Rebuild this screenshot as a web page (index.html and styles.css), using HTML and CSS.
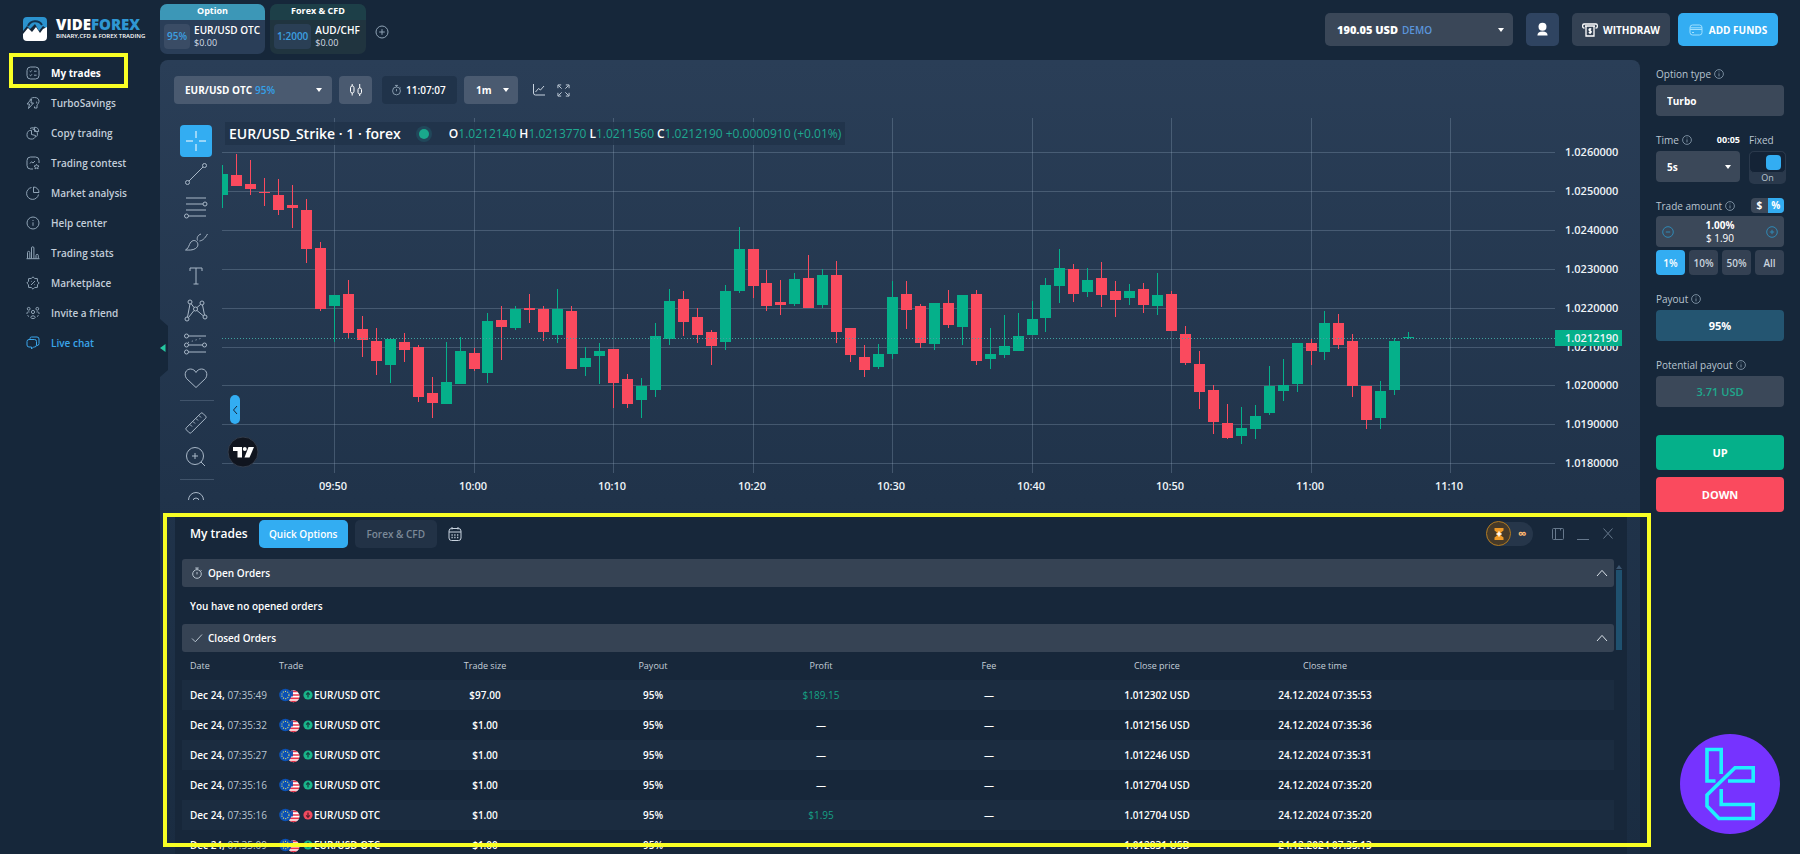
FILE: index.html
```html
<!DOCTYPE html>
<html lang="en">
<head>
<meta charset="utf-8">
<title>Videforex – Trading platform</title>
<link rel="stylesheet" href="styles.css">
</head>
<body>
<svg class="defs" aria-hidden="true">
  <defs>
    <symbol id="info" viewBox="0 0 10 10"><circle cx="5" cy="5" r="4.4"/><path d="M5 4.4V7.4M5 2.5V3.3"/></symbol>
    <symbol id="watch" viewBox="0 0 12 12"><circle cx="6" cy="7" r="4.3"/><path d="M4.3 1h3.4M6 1v1.6M6 5v2.4M9.6 2.9l.9.9"/></symbol>
    <symbol id="caret" viewBox="0 0 8 6"><path d="M1 1h6L4 5z"/></symbol>
    <symbol id="chev-up" viewBox="0 0 12 8"><path d="M1 7l5-5.6L11 7"/></symbol>
    <symbol id="flags" viewBox="0 0 21 15">
      <clipPath id="us-clip"><circle cx="14.5" cy="8.2" r="6"/></clipPath>
      <g clip-path="url(#us-clip)">
        <rect x="8" y="2" width="13" height="13" fill="#fff"/>
        <path d="M8 3.4h13M8 7h13M8 10.4h13M8 13.6h13" stroke="#e8334a" stroke-width="1.7"/>
        <rect x="8" y="2" width="6" height="6.4" fill="#2b4fa3"/>
      </g>
      <circle cx="6.4" cy="7" r="6.2" fill="#0a51b5"/>
      <circle cx="6.4" cy="7" r="3.6" fill="none" stroke="#d9d36a" stroke-width="1.1" stroke-dasharray="1.1 1.2"/>
    </symbol>
    <symbol id="up" viewBox="0 0 10 10"><circle cx="5" cy="5" r="4.6" fill="#19b58a"/><path d="M5 7.6V2.8M3.2 4.6L5 2.6l1.8 2" fill="none" stroke="#12403f" stroke-width="1.2"/></symbol>
    <symbol id="down" viewBox="0 0 10 10"><circle cx="5" cy="5" r="4.6" fill="#f04a5e"/><path d="M5 2.4v4.8M3.2 5.4L5 7.4l1.8-2" fill="none" stroke="#5c1c2c" stroke-width="1.2"/></symbol>
  </defs>
</svg>

<div class="app">
  <aside class="sidebar">
    <a class="logo" href="#">
      <svg class="logo-mark" viewBox="0 0 24 24"><path d="M4 0h16a4 4 0 0 1 4 4v8l-4-3-4 5-4-7-5 5-3-3-4 5V4a4 4 0 0 1 4-4z" fill="#2b93cf"/><path d="M5 9a8 8 0 0 1 14-1" fill="none" stroke="#12324e" stroke-width="2"/><path d="M0 17l5-6 4 4 4-5 4 6 3-4 4-2v10a4 4 0 0 1-4 4H4a4 4 0 0 1-4-4z" fill="#fff"/></svg>
      <span class="logo-text"><span class="logo-name">VIDE<b>FOREX</b></span><span class="logo-sub">BINARY,CFD &amp; FOREX TRADING</span></span>
    </a>
    <nav class="nav">
      <a class="nav-item current" href="#"><svg class="icon" viewBox="0 0 14 14"><rect x="1" y="1" width="12" height="12" rx="3.5"/><path d="M3.6 5l.9.9 1.4-1.6M3.6 9l.9.9 1.4-1.6M8 5.2h2.6M8 9.2h2.6"/></svg>My trades</a>
      <a class="nav-item" href="#"><svg class="icon" viewBox="0 0 14 14"><path d="M4 4.500C4 2.500 6 1.500 8.500 1.500c3 0 4.500 1.500 4.500 4-.5 2-1.500 3-2 3.500V12H8.500v-1.500M5.500 3L1 8h2.500L2.500 12.500 7.500 7H5z"/><path d="M10 5.500c1 .5 1 1.500 0 2"/></svg>TurboSavings</a>
      <a class="nav-item" href="#"><svg class="icon" viewBox="0 0 14 14"><path d="M8.500 1.200a4.300 4.300 0 0 1 4.200 4.300H8.500z"/><path d="M6.500 3.200a5 5 0 0 1 5 5 4 4 0 0 1-1 2.500"/><path d="M5.500 4.300a4.400 4.400 0 1 0 4.200 5.200L5.500 8.500z"/><path d="M4 2.500A5 5 0 0 1 8 2"/></svg>Copy trading</a>
      <a class="nav-item" href="#"><svg class="icon" viewBox="0 0 14 14"><path d="M7 13H4.500A3.500 3.500 0 0 1 1 9.500v-5A3.500 3.500 0 0 1 4.500 1h5A3.500 3.500 0 0 1 13 4.500V7"/><path d="M4 7.500l1.500-1.700L7 7l2-2"/><path d="M10.500 8.300l.8 1.500 1.700.2-1.200 1.200.3 1.700-1.600-.8-1.500.8.3-1.700L8 10l1.700-.2z"/></svg>Trading contest</a>
      <a class="nav-item" href="#"><svg class="icon" viewBox="0 0 14 14"><path d="M5.500 1.500a6 6 0 1 0 7 7"/><path d="M7.500 1a5.500 5.500 0 0 1 5.500 5.500H7.500z"/></svg>Market analysis</a>
      <a class="nav-item" href="#"><svg class="icon" viewBox="0 0 14 14"><circle cx="7" cy="7" r="6"/><path d="M7 6.300v3.500M7 4v1"/></svg>Help center</a>
      <a class="nav-item" href="#"><svg class="icon" viewBox="0 0 14 14"><path d="M1.500 12.500V6.500a1 1 0 0 1 2.300 0v6M5.500 12.500V2a1.200 1.200 0 0 1 2.400 0v10.500M10 12.500v-3a1.100 1.100 0 0 1 2.300 0v3M.5 12.700h13"/></svg>Trading stats</a>
      <a class="nav-item" href="#"><svg class="icon" viewBox="0 0 14 14"><path d="M7 .8L8.700 2.500 11.400 2.600 11.500 5.300 13.200 7 11.500 8.700 11.400 11.400 8.700 11.500 7 13.200 5.300 11.500 2.600 11.400 2.500 8.700.8 7 2.500 5.300 2.600 2.600 5.300 2.500z"/><path d="M5 9l4-4M5.200 5.400h.6M8.300 8.600h.6"/></svg>Marketplace</a>
      <a class="nav-item" href="#"><svg class="icon" viewBox="0 0 14 14"><circle cx="7" cy="6" r="1.600"/><circle cx="2.700" cy="2.800" r="1.400"/><circle cx="11.300" cy="2.800" r="1.400"/><path d="M4.700 11.500a2.400 2.400 0 0 1 4.600 0 3 3 0 0 1-4.600 0zM1 8c-.5-1.800 1-2.500 2.500-2M13 8c.5-1.800-1-2.500-2.500-2M3 10.500L1.500 9.500M11 10.500l1.500-1"/></svg>Invite a friend</a>
      <a class="nav-item chat" href="#"><svg class="icon" viewBox="0 0 14 14"><path d="M4 3.500V2.500A1.500 1.500 0 0 1 5.500 1H11a2 2 0 0 1 2 2v4.500a2 2 0 0 1-2 2"/><path d="M3 3.500h5.500a2 2 0 0 1 2 2v3.500a2 2 0 0 1-2 2H7.500L5.500 13v-2H3a2 2 0 0 1-2-2V5.500a2 2 0 0 1 2-2z"/></svg>Live chat</a>
    </nav>
  </aside>

  <header class="topbar">
    <div class="tabs">
      <a class="tab" href="#">
        <span class="tab-kind">Option</span>
        <span class="tab-body"><span class="tab-rate">95%</span><span class="tab-pair"><b>EUR/USD OTC</b><small>$0.00</small></span></span>
      </a>
      <a class="tab forex" href="#">
        <span class="tab-kind">Forex &amp; CFD</span>
        <span class="tab-body"><span class="tab-rate">1:2000</span><span class="tab-pair"><b>AUD/CHF</b><small>$0.00</small></span></span>
      </a>
      <button class="add-tab" aria-label="Add chart"><svg viewBox="0 0 14 14"><circle cx="7" cy="7" r="6"/><path d="M7 4.200v5.600M4.200 7h5.600"/></svg></button>
    </div>
    <div class="account">
      <button class="balance"><b>190.05 USD</b><span>DEMO</span><svg class="caret"><use href="#caret"/></svg></button>
      <button class="profile" aria-label="Profile"><svg viewBox="0 0 14 16"><circle cx="7" cy="5" r="4.300"/><path d="M1.500 14.500c0-3 2-4.300 5.500-4.300s5.500 1.300 5.500 4.300z"/></svg></button>
      <button class="withdraw"><svg viewBox="0 0 16 14"><path d="M2.500 5H2a1.300 1.300 0 0 1-1.300-1.300V2.300A1.300 1.300 0 0 1 2 1h12a1.300 1.300 0 0 1 1.300 1.300v1.400A1.300 1.300 0 0 1 14 5h-.5M3 3h10M4 3v10h8V3"/><path d="M9.300 6.300C8.500 5.500 7 5.800 7 6.800c0 1.200 2.300.8 2.300 2 0 1-1.600 1.300-2.500.4M8.100 5v6"/></svg>WITHDRAW</button>
      <button class="add-funds"><svg viewBox="0 0 14 12"><rect x="1" y="1" width="12" height="10" rx="2.500"/><path d="M1 3.800h12M1 5.500h12M3 8.500h2"/></svg>ADD FUNDS</button>
    </div>
  </header>

  <main class="main">
    <div class="toolbar">
      <button class="chip asset"><b>EUR/USD OTC</b><span>95%</span><svg class="caret"><use href="#caret"/></svg></button>
      <button class="chip candles" aria-label="Chart type"><svg viewBox="0 0 14 14"><rect x="1.500" y="3" width="3.500" height="7" rx="1.700"/><path d="M3.200 1v2M3.200 10v2.500"/><rect x="9" y="5" width="3.500" height="6" rx="1.700"/><path d="M10.700 1v4M10.700 11v2"/></svg></button>
      <span class="clock"><svg><use href="#watch"/></svg>11:07:07</span>
      <label class="chip frame"><select aria-label="Timeframe"><option>1m</option></select><svg class="caret"><use href="#caret"/></svg></label>
      <button class="bare" aria-label="Indicators"><svg viewBox="0 0 14 14"><path d="M1.500 1v9a2 2 0 0 0 2 2H13M3.500 9l3-3.500 2 1.500L12 3"/></svg></button>
      <button class="bare small" aria-label="Full screen"><svg viewBox="0 0 14 14"><path d="M1 4.500V1h3.500M1.500 1.500l3.500 3.500M9.500 1H13v3.500M12.500 1.500L9 5M1 9.500V13h3.500M1.500 12.500L5 9M13 9.500V13H9.500M12.500 12.500L9 9"/></svg></button>
    </div>

    <div class="workspace">
      <div class="tools">
        <button class="tool active" aria-label="Crosshair"><svg viewBox="0 0 24 24"><path d="M12 2v7M12 15v7M2 12h7M15 12h7"/></svg></button>
        <button class="tool" aria-label="Trend line"><svg viewBox="0 0 24 24"><circle cx="3.500" cy="20.500" r="2"/><circle cx="20.500" cy="3.500" r="2"/><path d="M5 19L19 5"/></svg></button>
        <button class="tool" aria-label="Fib retracement"><svg viewBox="0 0 24 24"><path d="M2 2h20M2 8h17M2 14h20M4.500 20h17.500"/><circle cx="21" cy="8" r="2"/><circle cx="2.500" cy="20" r="2"/></svg></button>
        <button class="tool" aria-label="Brush"><svg viewBox="0 0 24 24"><path d="M1.500 20c2-1 3-3 4-5.500 1.500-4 5-5 7-3s2 5-1 7C8.500 20.500 5 20 1.500 20zM13.500 10.500c-1-3 .5-5.500 3.500-6.500M15.500 11c3-.5 5-2 8-7"/></svg></button>
        <button class="tool" aria-label="Text"><svg viewBox="0 0 24 24"><path d="M6 7V4h12v3M12 4v16M9.500 20h5"/></svg></button>
        <button class="tool" aria-label="Patterns"><svg viewBox="0 0 24 24"><circle cx="3" cy="21" r="2"/><circle cx="6" cy="4" r="2"/><circle cx="11.500" cy="11" r="2"/><circle cx="18" cy="5" r="2"/><circle cx="21" cy="19" r="2"/><path d="M3.500 19L6 6M7 5.500l3 4M13 9.500l3.500-3M18.500 7l2 10M4.500 19.500l5.500-7M13 12.500l6.500 5.500"/></svg></button>
        <button class="tool" aria-label="Forecast"><svg viewBox="0 0 24 24"><circle cx="2.500" cy="4" r="2"/><circle cx="2.500" cy="13" r="2"/><circle cx="20.500" cy="13" r="2"/><circle cx="2.500" cy="20" r="2"/><path d="M4.500 4H22M4.500 13h14M4.500 20H22"/><path d="M4 10.500l14-4.500" stroke-dasharray="1 3"/></svg></button>
        <button class="tool" aria-label="Icons"><svg viewBox="0 0 24 24"><path d="M12 21.500L2.500 12.500C-.5 8 2 3 6.500 3c2.500 0 4.500 1.500 5.500 3.500C13 4.500 15 3 17.500 3c4.500 0 7 5 4 9.500z"/></svg></button>
        <span class="rule"></span>
        <button class="tool" aria-label="Measure"><svg viewBox="0 0 24 24"><path d="M2.300 16.800L16.800 2.300q1-1 2 0l2.900 2.900q1 1 0 2L7.200 21.700q-1 1-2 0l-2.900-2.900q-1-1 0-2zM6 13.500l2 2M9 10.500l2 2M12 7.500l2 2M15 4.500l2 2"/></svg></button>
        <button class="tool" aria-label="Zoom in"><svg viewBox="0 0 24 24"><circle cx="11" cy="11" r="8.500"/><path d="M17 17l4 4M11 8v6M8 11h6"/></svg></button>
        <span class="rule"></span>
        <button class="tool cut" aria-label="Magnet"><svg viewBox="0 0 24 24"><path d="M4.500 10a7.500 7.500 0 0 1 15 0M9 11a3 3 0 0 1 6 0"/></svg></button>
      </div>
      <div class="chart">
        <svg id="plot" viewBox="220 118 1402 382" role="img" aria-label="EUR/USD one minute candles"></svg>
        <div class="legend">
          <span class="symbol">EUR/USD_Strike · 1 · forex</span>
          <span class="dot"></span>
          <span class="ohlc"><span><b>O</b>1.0212140</span><span><b>H</b>1.0213770</span><span><b>L</b>1.0211560</span><span><b>C</b>1.0212190</span><span>+0.0000910 (+0.01%)</span></span>
        </div>
        <button class="fold" aria-label="Hide drawing tools"><svg viewBox="0 0 6 10"><path d="M5 1L1.500 5 5 9"/></svg></button>
        <a class="tv" href="#" aria-label="TradingView"><svg viewBox="0 0 32 32"><circle cx="16" cy="16" r="15"/><path d="M6 11h9v10.500h-4.500V15H6z"/><circle cx="17.800" cy="13" r="2"/><path d="M21.500 11H27l-4.500 10.500h-5z"/></svg></a>
      </div>
    </div>
    <button class="drawer" aria-label="Collapse menu"><svg viewBox="0 0 6 8"><path d="M5.500 0v8L0 4z"/></svg></button>

    <section class="trades">
      <div class="trades-head">
        <h2>My trades</h2>
        <button class="mode on">Quick Options</button>
        <button class="mode">Forex &amp; CFD</button>
        <button class="calendar" aria-label="Pick dates"><svg viewBox="0 0 14 16"><rect x="1" y="2.500" width="12" height="12" rx="2.500"/><path d="M1 6h12M4 1v2.500M10 1v2.500"/><path d="M3.500 9h7.500M3.500 11.500h7.500" stroke-dasharray="1.200 1.600" stroke-width="1.400"/></svg></button>
        <span class="spacer"></span>
        <span class="expiry"><span class="coin"><svg viewBox="0 0 12 14"><path d="M1.500 1h9v2.500L8 5.500 8.500 7 8 8.500l2.500 2V13h-9v-2.500L4 8.500 3.500 7 4 5.500 1.500 3.500z" fill="#f09a26"/><path d="M6 4.500v5M3.500 7h5" stroke="#fff" stroke-width="1.500"/></svg></span><b>∞</b></span>
        <button class="win" aria-label="Dock"><svg viewBox="0 0 14 14"><rect x="1.500" y="1.500" width="11" height="11" rx="1"/><path d="M4.500 1.500v11M9.500 1.500v2"/></svg></button>
        <button class="win" aria-label="Minimize"><svg viewBox="0 0 14 14"><path d="M1 12.500h12"/></svg></button>
        <button class="win" aria-label="Close"><svg viewBox="0 0 14 14"><path d="M2.500 1.500l9 10M11.500 1.500l-9 10"/></svg></button>
      </div>
      <div class="orders">
        <div class="orders-body">
          <button class="bar"><svg class="lead"><use href="#watch"/></svg>Open Orders<svg class="chev"><use href="#chev-up"/></svg></button>
          <p class="empty">You have no opened orders</p>
          <button class="bar"><svg class="lead" viewBox="0 0 12 12"><path d="M1 6.500l3.300 3.300L11 2.500"/></svg>Closed Orders<svg class="chev"><use href="#chev-up"/></svg></button>
          <table>
            <colgroup><col class="c-date"><col class="c-trade"><col class="c-num"><col class="c-num"><col class="c-num"><col class="c-num"><col class="c-num"><col class="c-num"><col></colgroup>
            <thead><tr><th>Date</th><th>Trade</th><th>Trade size</th><th>Payout</th><th>Profit</th><th>Fee</th><th>Close price</th><th>Close time</th><th></th></tr></thead>
            <tbody id="closed"></tbody>
          </table>
        </div>
        <div class="scroll"><svg viewBox="0 0 6 4"><path d="M0 4l3-4 3 4z"/></svg><span></span></div>
      </div>
    </section>
    <div class="mark mark-trades"></div>
  </main>

  <aside class="ticket">
    <div class="field">
      <label for="otype">Option type <svg><use href="#info"/></svg></label>
      <select id="otype" class="box"><option>Turbo</option></select>
    </div>
    <div class="pair">
      <div class="field grow">
        <div class="row"><label for="time">Time <svg><use href="#info"/></svg></label><b class="mini">00:05</b></div>
        <span class="box select"><select id="time"><option>5s</option></select><svg class="caret"><use href="#caret"/></svg></span>
      </div>
      <div class="field">
        <label for="fixed">Fixed</label>
        <label class="switch"><input id="fixed" type="checkbox" checked><span class="track"></span><span>On</span></label>
      </div>
    </div>
    <div class="field amount-field">
      <div class="row"><label for="amount">Trade amount <svg><use href="#info"/></svg></label><span class="unit"><button>$</button><button class="on">%</button></span></div>
      <div class="box amount">
        <button aria-label="Less"><svg viewBox="0 0 12 12"><circle cx="6" cy="6" r="5.300"/><path d="M3.800 6h4.400"/></svg></button>
        <span class="value"><input id="amount" value="1.00%"><span>$ 1.90</span></span>
        <button aria-label="More"><svg viewBox="0 0 12 12"><circle cx="6" cy="6" r="5.300"/><path d="M3.800 6h4.400M6 3.800v4.400"/></svg></button>
      </div>
      <div class="quick"><button class="on">1%</button><button>10%</button><button>50%</button><button>All</button></div>
    </div>
    <div class="field">
      <span class="label">Payout <svg><use href="#info"/></svg></span>
      <output class="box payout">95%</output>
    </div>
    <div class="field">
      <span class="label">Potential payout <svg><use href="#info"/></svg></span>
      <output class="box potential">3.71 USD</output>
    </div>
    <div class="go"><button class="go-up">UP</button><button class="go-down">DOWN</button></div>
  </aside>
  <div class="mark mark-nav"></div>
  <a class="badge" href="#" aria-label="Assistant"><svg viewBox="10 10 100 100"><circle cx="60" cy="60" r="50" fill="#7633ff"/><path d="M45.500 57H37V25.500H51.200V50M58 57H83.200V43.800H65L37 71V82L49 94.500H83.200V80.500H51.200V65" fill="none" stroke="#1ff0ff" stroke-width="3.600"/></svg></a>
</div>
<script src="app.js"></script>
</body>
</html>
```

FILE: styles.css
```css
* { box-sizing: border-box; }
body { margin: 0; background: #16273a; color: #fff; font: 11px/14px "Open Sans", "Noto Sans", sans-serif; }
button, input, select { font: inherit; color: inherit; border: 0; background: none; margin: 0; padding: 0; }
button { cursor: pointer; }
select { appearance: none; outline: 0; width: 100%; }
a { color: inherit; text-decoration: none; }
svg { display: block; flex: none; fill: none; stroke: currentColor; }
.defs { position: absolute; width: 0; height: 0; }
.caret { width: 8px; height: 6px; fill: #fff; stroke: none; }

.app { position: relative; display: grid; grid-template-columns: 160px minmax(0, 1fr) 160px; grid-template-rows: 60px minmax(0, 1fr); height: 100vh; overflow: hidden; }

/* Sidebar */
.sidebar { grid-row: 1 / 3; }
.logo { display: flex; align-items: center; gap: 9px; height: 58px; padding-left: 23px; }
.logo-mark { width: 24px; height: 24px; stroke: none; }
.logo-text { display: flex; flex-direction: column; }
.logo-name { font-size: 15px; line-height: 14px; font-weight: 800; }
.logo-name b { color: #2f97d3; font-weight: 800; }
.logo-sub { font-size: 6px; line-height: 10px; font-weight: 600; white-space: nowrap; }
.nav { display: flex; flex-direction: column; }
.nav-item { display: flex; align-items: center; gap: 11px; height: 30px; padding-left: 26px; color: #c2cdd9; font-size: 10px; font-weight: 600; }
.nav-item .icon { width: 14px; height: 14px; color: #8fa3b5; }
.nav-item.current { color: #fff; font-weight: 700; }
.nav-item.chat, .nav-item.chat .icon { color: #3aa5ea; }

/* Top bar */
.topbar { grid-column: 2 / 4; display: flex; justify-content: space-between; padding: 4px 22px 0 0; }
.tabs { display: flex; gap: 5px; align-items: flex-start; }
.tab { width: 105px; height: 50px; border-radius: 7px; background: #2a3e58; overflow: hidden; }
.tab-kind { display: block; height: 16px; background: #3c97b7; text-align: center; font-size: 9px; line-height: 14px; font-weight: 700; }
.tab-body { display: flex; align-items: center; gap: 4px; height: 33px; padding-left: 4px; }
.tab-rate { padding: 0 3px; border-radius: 4px; background: #3a4c65; color: #3c9fe0; font-size: 10px; font-weight: 600; line-height: 25px; }
.tab-pair { display: flex; flex-direction: column; white-space: nowrap; }
.tab-pair b { font-size: 10px; line-height: 13px; font-weight: 600; }
.tab-pair small { font-size: 9px; line-height: 12px; color: #d5dde6; }
.tab.forex { width: 96px; background: #20343f; }
.tab.forex .tab-kind { background: #1d3f48; }
.tab.forex .tab-rate { background: #2a3f55; }
.add-tab { width: 14px; height: 14px; margin: 21px 0 0 4px; color: #8fa3b5; }
.account { display: flex; padding-top: 9px; font-weight: 700; }
.account button { display: flex; align-items: center; height: 33px; border-radius: 5px; background: #3a4758; }
.balance { width: 188px; margin-right: 13px; padding: 0 8px 0 12px; gap: 4px; }
.balance b { font-size: 11px; }
.balance span { color: #5b95dc; font-size: 10px; font-weight: 600; }
.balance .caret { margin-left: auto; }
.account .profile { width: 33px; margin-right: 13px; justify-content: center; background: #2f4461; }
.profile svg { width: 13px; height: 15px; fill: #fff; stroke: none; }
.account .withdraw { width: 98px; margin-right: 8px; justify-content: center; gap: 5px; background: #344254; font-size: 10px; }
.withdraw svg { width: 16px; height: 14px; stroke-width: 1.300; }
.account .add-funds { width: 100px; justify-content: center; gap: 6px; background: #33adf2; font-size: 10px; }
.add-funds svg { width: 14px; height: 12px; color: #9fe0ff; }

/* Chart panel */
.main { position: relative; display: flex; flex-direction: column; background: linear-gradient(#2a3e57, #20334a 55%, #1a2c41); border-radius: 8px 8px 0 0; min-height: 0; }
.toolbar { display: flex; align-items: center; padding: 16px 14px 0; height: 44px; }
.chip { display: flex; align-items: center; height: 28px; border-radius: 4px; background: #4a5a70; }
.asset { width: 158px; margin-right: 7px; padding: 0 9px 0 11px; gap: 3px; }
.asset b { font-weight: 700; font-size: 10px; }
.asset span { color: #35a1e8; font-weight: 600; font-size: 10px; }
.asset .caret { margin-left: auto; }
.candles { width: 33px; justify-content: center; margin-right: 10px; }
.candles svg { width: 14px; height: 14px; }
.clock { display: flex; align-items: center; gap: 4px; width: 75px; height: 28px; padding-left: 9px; margin-right: 7px; border-radius: 4px; background: #20334a; font-size: 10px; font-weight: 600; }
.clock svg { width: 11px; height: 12px; color: #8fa3b5; }
.frame { width: 54px; margin-right: 14px; padding: 0 8px 0 12px; font-size: 10px; font-weight: 700; }
.bare { color: #c8d3df; margin-right: 11px; }
.bare svg { width: 14px; height: 14px; }
.bare.small svg { width: 13px; height: 13px; }
.workspace { display: grid; grid-template-columns: 46px minmax(0, 1fr); padding: 14px 18px 0 14px; }
.tools { display: flex; flex-direction: column; height: 382px; padding: 7px 6px 0; overflow: hidden; color: #a9b8c8; }
.tool { display: flex; align-items: center; justify-content: center; flex: none; width: 32px; height: 34px; }
.tool svg { width: 24px; height: 24px; stroke-width: 1; }
.tool.active { height: 32px; border-radius: 4px; background: #33adf2; color: #fff; }
.rule { flex: none; height: 1px; margin: 5px 0; background: #41546b; }
.chart { position: relative; }
#plot { width: 100%; height: auto; }
#plot line { shape-rendering: crispEdges; }
.grid { stroke: #9fb2c8; stroke-opacity: .28; }
.last { stroke: #3fa3a0; stroke-dasharray: 1 2; }
.up-candle { fill: #05b08a; stroke: #05b08a; }
.down-candle { fill: #fa4a5e; stroke: #fa4a5e; }
.axis { fill: #eef3f8; stroke: none; font-size: 11px; font-weight: 600; }
.price-tag { fill: #05b08a; stroke: none; }
.legend { position: absolute; left: 5px; top: 4px; display: flex; align-items: center; height: 23px; padding: 0 4px; background: rgba(32, 51, 74, .85); white-space: nowrap; }
.symbol { font-size: 14px; font-weight: 600; }
.dot { width: 10px; height: 10px; margin: 0 20px 0 18px; border-radius: 50%; background: #1aa88c; box-shadow: 0 0 0 3px #21475a; }
.ohlc { display: flex; gap: 3px; font-size: 12px; color: #1fa890; }
.ohlc b { color: #fff; font-weight: 600; }
.fold { position: absolute; left: 10px; top: 277px; display: flex; align-items: center; justify-content: center; width: 10px; height: 29px; border-radius: 5px; background: #33adf2; color: #16273a; }
.fold svg { width: 6px; height: 10px; }
.tv { position: absolute; left: 7px; top: 318px; width: 32px; height: 32px; }
.tv circle:first-child { fill: #10151f; stroke: #323c4b; }
.tv path, .tv circle { fill: #fff; stroke: none; }
.drawer { position: absolute; left: 0; top: 259px; width: 8px; height: 58px; background: #16273a; clip-path: polygon(0 0, 100% 12%, 100% 88%, 0 100%); }
.drawer svg { width: 6px; height: 8px; fill: #25c7a0; stroke: none; }

/* Trades */
.trades { flex: 1; min-height: 0; display: flex; flex-direction: column; margin: 13px 13px 0 15px; background: #17273a; overflow: hidden; }
.trades-head { display: flex; align-items: center; height: 41px; padding: 0 12px 0 15px; }
.trades-head h2 { margin: 0 11px 0 0; font-size: 12px; font-weight: 600; }
.mode { width: 82px; height: 28px; margin-right: 11px; border-radius: 5px; background: #223246; color: #7b8998; font-size: 10px; font-weight: 600; }
.mode.on { width: 89px; margin-right: 7px; background: #33adf2; color: #fff; }
.calendar svg { width: 14px; height: 16px; color: #c8d3df; }
.spacer { flex: 1; }
.expiry { display: flex; align-items: center; gap: 7px; width: 47px; height: 24px; margin-right: 18px; border-radius: 12px; background: #26364a; color: #ffb870; }
.expiry b { font-size: 12px; }
.coin { display: flex; align-items: center; justify-content: center; width: 25px; height: 25px; border: 1px solid #b0791f; border-radius: 50%; background: #463a29; }
.coin svg { width: 12px; height: 14px; stroke: none; }
.win { margin-left: 11px; color: #66788c; }
.expiry + .win { margin-left: 0; }
.win svg { width: 14px; height: 14px; }
.orders { display: flex; flex: 1; min-height: 0; padding: 5px 4px 0 7px; }
.orders-body { flex: 1; overflow: hidden; }
.bar { display: flex; align-items: center; gap: 5px; width: 100%; height: 28px; padding: 0 6px 0 9px; border-radius: 3px; background: #364354; font-size: 10px; font-weight: 600; }
.lead { width: 12px; height: 12px; color: #b7c3cf; }
.chev { width: 12px; height: 8px; margin-left: auto; color: #dbe3ea; }
.empty { margin: 0; padding: 12px 8px; height: 37px; font-size: 10px; font-weight: 600; }
table { width: 100%; border-collapse: collapse; table-layout: fixed; }
.c-date { width: 89px; }
.c-trade { width: 130px; }
.c-num { width: 168px; }
th { height: 28px; padding: 0; font-size: 9px; font-weight: 400; color: #c5cfd9; }
td { height: 30px; padding: 0; text-align: center; font-size: 10px; font-weight: 600; line-height: 14px; white-space: nowrap; }
tbody tr:nth-child(odd) { background: #1b2c40; }
th:first-child, td:first-child { padding-left: 8px; text-align: left; }
th:nth-child(2), td:nth-child(2) { padding-left: 8px; text-align: left; }
td time span { color: #b9c5d1; font-weight: 400; }
.deal { display: flex; align-items: center; }
.flags { width: 21px; height: 15px; stroke: none; margin-right: 3px; }
.dir { width: 10px; height: 10px; stroke: none; margin-right: 1px; }
td.win-sum { color: #16a085; font-weight: 400; }
.scroll { width: 8px; padding-top: 6px; margin-left: 1px; }
.scroll svg { width: 6px; height: 4px; margin: 0 auto 1px; fill: #3d5670; stroke: none; }
.scroll span { display: block; width: 6px; height: 80px; margin: 0 auto; background: #1f516f; }

/* Order ticket */
.ticket { padding: 6px 16px 0 16px; display: flex; flex-direction: column; gap: 16px; }
.field { display: flex; flex-direction: column; gap: 4px; }
.field label, .label { display: flex; align-items: center; gap: 3px; height: 15px; color: #b9c5d1; font-size: 10px; white-space: nowrap; }
.field label svg, .label svg { width: 10px; height: 10px; stroke-width: .800; color: #8fa3b5; }
.box { display: flex; align-items: center; width: 100%; height: 31px; border-radius: 4px; background: #3b4859; padding: 0 11px; font-size: 10px; font-weight: 700; }
.select { padding-right: 8px; }
.row { display: flex; justify-content: space-between; align-items: center; height: 15px; }
.mini { font-size: 9px; }
.pair { display: flex; gap: 9px; margin-right: -2px; }
.grow { flex: 1; }
.field .switch { display: flex; flex-direction: column; gap: 0; width: 37px; height: 33px; margin-bottom: -2px; border-radius: 5px; background: #2a394c; font-size: 9px; line-height: 10px; }
.switch input { position: absolute; opacity: 0; }
.track { display: flex; justify-content: flex-end; width: 37px; height: 22px; padding: 3px 4px; border: 1px solid #2a394c; border-radius: 5px; background: #142336; }
.track::after { content: ""; width: 15px; height: 15px; border-radius: 4px; background: #33adf2; }
.amount-field { gap: 3px; }
.unit { display: flex; width: 33px; height: 15px; border-radius: 4px; overflow: hidden; background: #3b4859; }
.unit button { flex: 1; font-size: 10px; line-height: 15px; font-weight: 700; }
.unit .on { background: #33adf2; }
.amount { padding: 0 6px; justify-content: space-between; }
.amount svg { width: 12px; height: 12px; color: #3089b5; }
.value { display: flex; flex-direction: column; text-align: center; line-height: 13px; font-size: 10px; }
.value input { width: 60px; height: 13px; text-align: center; font-weight: 700; }
.value span { font-weight: 400; }
.quick { display: flex; gap: 4px; }
.quick button { flex: 1; height: 25px; border-radius: 4px; background: #344153; color: #c9d3dd; font-size: 10px; font-weight: 600; }
.quick .on { background: #33adf2; color: #fff; }
.payout { justify-content: center; background: #245571; font-size: 11px; }
.potential { justify-content: center; color: #1fa88d; font-size: 11px; font-weight: 600; }
.go { display: flex; flex-direction: column; gap: 7px; padding-top: 12px; }
.go button { height: 35px; border-radius: 4px; font-weight: 700; }
.go-up { background: #05b08a; }
.go-down { background: #fa4a5e; }

/* Highlights and floating badge */
.mark { position: absolute; border: 4px solid #f9ff25; pointer-events: none; }
.mark-nav { left: 9px; top: 53px; width: 119px; height: 35px; }
.mark-trades { left: 3px; right: -11px; top: 453px; bottom: 7px; }
.badge { position: absolute; right: 20px; bottom: 20px; width: 100px; height: 100px; }
.badge svg { stroke: none; }
```

FILE: app.js
```js
// Each candle: direction, body top, body bottom, wick top, wick bottom.
const candles = [
  ['u',174,195,165,208],['d',175,186,154,186],['d',184,189,160,195],['d',192,193,178,206],['d',195,210,179,215],
  ['d',205,208,185,228],['d',210,249,199,263],['d',248,309,242,311],['u',295,306,295,342],['d',294,333,280,338],
  ['d',329,340,316,357],['d',341,361,328,375],['u',339,365,339,383],['d',342,350,333,362],['d',347,397,345,402],
  ['d',393,403,377,418],['u',382,404,342,404],['u',351,384,337,384],['d',353,369,348,371],['u',321,373,313,383],
  ['d',320,327,306,360],['u',309,328,306,330],['d',308,310,294,323],['d',309,332,306,341],['u',309,335,289,343],
  ['d',311,369,306,369],['u',358,367,347,376],['u',351,356,343,384],['d',349,383,349,408],['d',379,404,374,408],
  ['u',386,400,378,418],['u',336,390,323,397],['u',301,339,289,345],['d',299,322,291,336],['d',317,335,308,343],
  ['d',332,346,330,365],['u',291,342,285,350],['u',249,291,227,293],['d',249,286,249,298],['d',283,306,270,311],
  ['d',302,305,280,315],['u',279,304,273,306],['d',278,308,255,308],['u',275,305,269,308],['d',275,332,261,343],
  ['d',328,355,328,362],['d',357,370,345,377],['u',354,367,344,369],['u',297,354,281,359],['d',294,310,281,329],
  ['d',306,343,304,348],['u',303,344,303,350],['d',303,325,290,328],['u',295,327,295,345],['d',294,361,290,365],
  ['u',354,359,328,369],['u',346,355,315,358],['u',336,351,313,351],['u',319,335,301,335],['u',285,318,278,332],
  ['u',268,286,249,303],['d',269,294,264,302],['u',280,292,268,297],['d',278,295,262,307],['d',291,300,281,317],
  ['u',291,298,284,305],['d',289,305,283,313],['u',295,306,273,315],['d',294,331,291,331],['d',334,363,326,365],
  ['d',364,392,351,409],['d',390,422,385,434],['d',423,438,404,439],['u',428,436,407,444],['u',416,429,405,439],
  ['u',386,413,366,415],['u',385,391,359,401],['u',343,384,343,392],['d',343,351,339,365],['u',323,352,311,360],
  ['d',323,345,314,349],['d',341,386,334,397],['d',386,420,386,429],['u',391,418,381,429],['u',341,390,338,395],
  ['u',337,338,332,339]
];
const STEP = 13.95, FIRST = 222.4;
let out = '<clipPath id="area"><rect x="222" y="118" width="1333" height="355"/></clipPath>';

['09:50','10:00','10:10','10:20','10:30','10:40','10:50','11:00','11:10'].forEach((t, i) => {
  const x = Math.round(FIRST + STEP * (8 + 10 * i));
  out += `<line class="grid" x1="${x}" x2="${x}" y1="118" y2="473"/><text class="axis" text-anchor="middle" x="${x - 1}" y="490">${t}</text>`;
});
for (let i = 0; i < 9; i++) {
  const y = Math.round(152 + 38.9 * i);
  out += `<line class="grid" x1="222" x2="1555" y1="${y}" y2="${y}"/><text class="axis" x="1565" y="${y + 4}">1.0${260 - 10 * i}000</text>`;
}
out += '<g clip-path="url(#area)">';
candles.forEach(([dir, top, bottom, high, low], i) => {
  const x = Math.round(FIRST + STEP * i);
  out += `<g class="${dir === 'u' ? 'up' : 'down'}-candle"><line x1="${x}" x2="${x}" y1="${high}" y2="${low}"/><rect stroke="none" x="${x - 5}" y="${top}" width="11" height="${Math.max(1, bottom - top)}"/></g>`;
});
out += '</g><line class="last" x1="222" x2="1555" y1="338" y2="338"/>' +
  '<rect class="price-tag" x="1555" y="330" width="67" height="16"/><text class="axis" x="1565" y="342">1.0212190</text>';
document.getElementById('plot').innerHTML = out;

const rows = [
  ['07:35:49','up','$97.00','$189.15','1.012302','07:35:53'],
  ['07:35:32','up','$1.00','—','1.012156','07:35:36'],
  ['07:35:27','up','$1.00','—','1.012246','07:35:31'],
  ['07:35:16','up','$1.00','—','1.012704','07:35:20'],
  ['07:35:16','down','$1.00','$1.95','1.012704','07:35:20'],
  ['07:35:09','up','$1.00','—','1.012831','07:35:13']
];
document.getElementById('closed').innerHTML = rows.map(([open, dir, size, profit, price, close]) =>
  `<tr><td><time>Dec 24, <span>${open}</span></time></td>` +
  `<td><span class="deal"><svg class="flags"><use href="#flags"/></svg><svg class="dir"><use href="#${dir}"/></svg>EUR/USD OTC</span></td>` +
  `<td>${size}</td><td>95%</td><td class="${profit === '—' ? '' : 'win-sum'}">${profit}</td><td>—</td>` +
  `<td>${price} USD</td><td>24.12.2024 ${close}</td><td></td></tr>`).join('');
```
